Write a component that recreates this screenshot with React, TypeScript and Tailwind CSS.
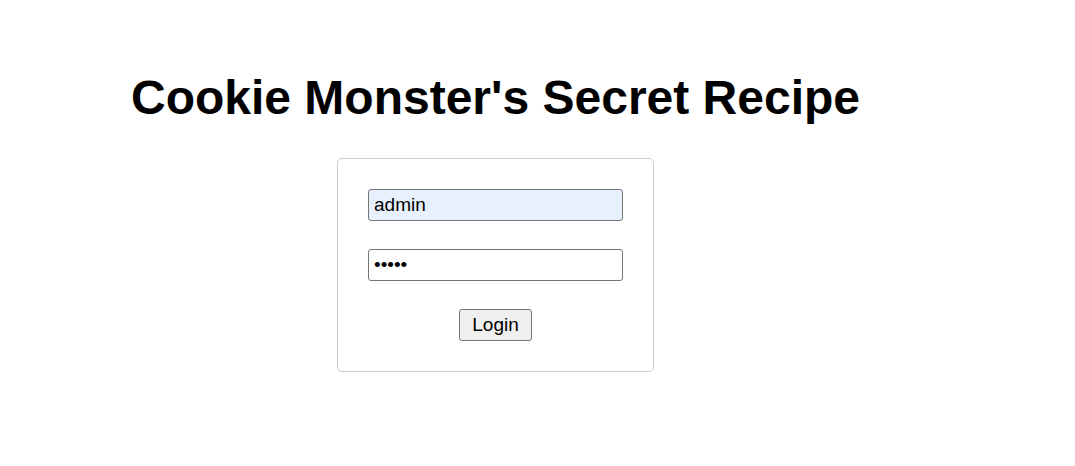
const App = () => {
  return (
    <div className="min-h-[466px] bg-white font-['Liberation_Sans',Arial,sans-serif] text-black">
      <div className="w-[991px] flex flex-col items-center pt-[70px]">
        <h1 className="text-[48px] leading-[55px] font-bold">Cookie Monster's Secret Recipe</h1>
        <form
          className="mt-[33px] w-[317px] border border-[#cccccc] rounded-[5px] p-[30px] flex flex-col items-center"
          onSubmit={(e) => e.preventDefault()}
        >
          <input
            type="text"
            defaultValue="admin"
            className="w-[255px] h-[32px] px-[5px] text-[19px] bg-[#e8f0fe] border border-[#767676] rounded-[3px] outline-none"
          />
          <input
            type="password"
            defaultValue="admin"
            className="mt-[28px] w-[255px] h-[32px] px-[5px] text-[19px] bg-white border border-[#767676] rounded-[3px] outline-none"
          />
          <button
            type="submit"
            className="mt-[28px] w-[73px] h-[32px] text-[19px] bg-[#efefef] border border-[#767676] rounded-[3px]"
          >
            Login
          </button>
        </form>
      </div>
    </div>
  );
};

export default App;
